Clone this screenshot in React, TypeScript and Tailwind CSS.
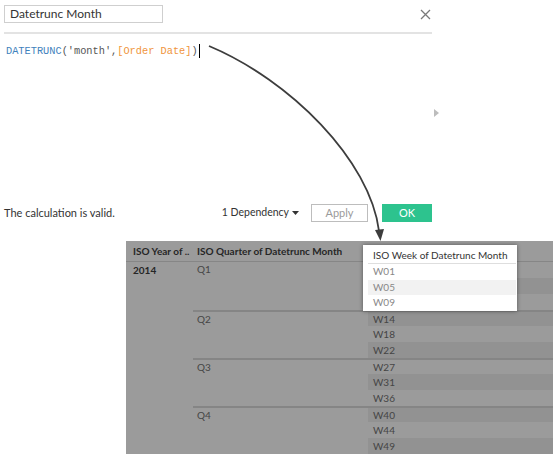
import React from "react";

const weeks = ["W01","W05","W09","W14","W18","W22","W27","W31","W36","W40","W44","W49"];
const quarters = ["Q1","Q2","Q3","Q4"];

export default function App() {
  return (
    <div className="relative w-[553px] h-[454px] bg-white overflow-hidden" style={{ fontFamily: "Lato, 'Open Sans', sans-serif" }}>
      {/* Dialog */}
      <div className="ml-[4px] w-[428px] h-[240px] flex flex-col">
        <div className="pt-[5px] flex items-start justify-between">
          <div className="w-[159px] h-[18px] border border-[#cfcfcf] flex items-center pl-[5px] text-[12px] text-[#333]">Datetrunc Month</div>
          <svg width="11" height="11" viewBox="0 0 11 11" className="mt-[4px] mr-[1px]">
            <path d="M1 1 L10 10 M10 1 L1 10" stroke="#7a7a7a" strokeWidth="1.3" fill="none" />
          </svg>
        </div>
        <div className="mt-[9px] h-[2px] bg-[#e3e3e3]" />
        <div className="relative h-[170px]">
          <div className="pt-[10px] pl-[2px] flex items-center text-[10.3px] leading-[14px]" style={{ fontFamily: "'Liberation Mono', monospace" }}>
            <span className="text-[#3f82bd]">DATETRUNC</span>
            <span className="text-[#555]">(</span>
            <span className="text-[#555]">'month'</span>
            <span className="text-[#555]">,</span>
            <span className="text-[#f0953c]">[Order Date]</span>
            <span className="text-[#555]">)</span>
            <span className="ml-[1px] w-[1px] h-[14px] bg-black" />
          </div>
          <div className="absolute left-[430px] top-[75px] w-0 h-0 border-y-[4px] border-y-transparent border-l-[5px] border-l-[#bdbdbd]" />
        </div>
        <div className="h-[18px] flex items-center text-[11px] text-[#333]">
          <span>The calculation is valid.</span>
          <span className="ml-auto flex items-center text-[10.5px]">1 Dependency
            <svg width="7" height="4" viewBox="0 0 7 4" className="ml-[3px]"><path d="M0 0 L7 0 L3.5 4 Z" fill="#333" /></svg>
          </span>
          <div className="ml-[12px] w-[57px] h-[18px] border border-[#bdbdbd] flex items-center justify-center text-[#9a9a9a]">Apply</div>
          <div className="ml-[14px] w-[50px] h-[18px] bg-[#2dc38e] flex items-center justify-center text-white">OK</div>
        </div>
      </div>

      {/* Table region */}
      <div className="ml-[126px] mt-[1px] h-[213px] bg-[#9b9b9b] relative text-[10px]" style={{ fontFamily: "Lato, 'Open Sans', sans-serif" }}>
        <div className="h-[21px] border-b border-[#868686] flex items-center font-bold text-[#262626] whitespace-nowrap">
          <div className="w-[67px] pl-[7px]">ISO Year of ..</div>
          <div className="pl-[4px]">ISO Quarter of Datetrunc Month</div>
        </div>
        <div className="flex">
          <div className="w-[67px] pl-[7px] pt-[1px] font-bold text-[#262626] leading-[15px]">2014</div>
          <div className="flex-1 flex flex-col">
            {quarters.map((q, qi) => (
              <div key={q} className={`flex h-[48px] ${qi > 0 ? "border-t-2 border-[#858585]" : ""}`}>
                <div className="w-[175px] pl-[4px] text-[#454545] leading-[15px]">{q}</div>
                <div className="flex-1 flex flex-col">
                  {weeks.slice(qi * 3, qi * 3 + 3).map((w, wi) => {
                    const idx = qi * 3 + wi;
                    return (
                      <div key={w} className={`${qi > 0 && wi === 0 ? "h-[14px]" : "h-[16px]"} pl-[5px] flex items-center text-[#454545] ${idx % 2 === 1 ? "bg-[#929292]" : ""}`}>{w}</div>
                    );
                  })}
                </div>
              </div>
            ))}
          </div>
        </div>

        {/* Popup */}
        <div className="absolute left-[237px] top-[4px] w-[154px] h-[66px] bg-white shadow-[0_0_4px_rgba(0,0,0,0.45)] pl-[5px] pr-[1px] pt-[3px] whitespace-nowrap">
          <div className="h-[16px] flex items-center pl-[5px] text-[#333] border-b border-[#dedede]">ISO Week of Datetrunc Month</div>
          {["W01","W05","W09"].map((w, i) => (
            <div key={w} className={`h-[15.5px] flex items-center pl-[5px] text-[#888] ${i === 1 ? "bg-[#f2f2f2]" : ""}`}>{w}</div>
          ))}
        </div>
      </div>

      {/* Arrow */}
      <svg className="absolute inset-0 pointer-events-none" width="553" height="454" viewBox="0 0 553 454">
        <path d="M209 46 C 290 80, 370 160, 379 231" stroke="#3d3d3d" strokeWidth="1.8" fill="none" />
        <path d="M375 230 L384 229 L380.5 241 Z" fill="#3d3d3d" />
      </svg>
    </div>
  );
}
